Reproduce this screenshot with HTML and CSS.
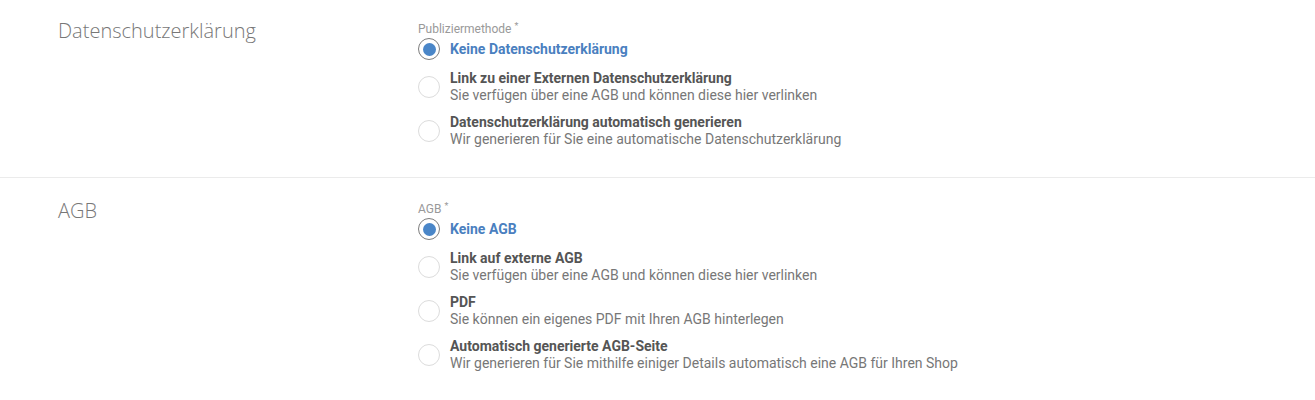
FILE: index.html
```html
<!DOCTYPE html>
<html lang="de">
<head>
    <meta charset="UTF-8">
    <meta name="viewport" content="width=device-width, initial-scale=1.0">
    <title>Rechtliches</title>
    <link rel="stylesheet" href="styles.css">
</head>
<body>
    <div class="section first">
        <h2 class="section_title">Datenschutzerklärung</h2>
        <div class="field">
            <div class="field_label">Publiziermethode <span class="req">*</span></div>
            <label class="option selected">
                <span class="radio"></span>
                <span class="option_text">
                    <span class="option_title">Keine Datenschutzerklärung</span>
                </span>
            </label>
            <label class="option">
                <span class="radio"></span>
                <span class="option_text">
                    <span class="option_title">Link zu einer Externen Datenschutzerklärung</span>
                    <span class="option_desc">Sie verfügen über eine AGB und können diese hier verlinken</span>
                </span>
            </label>
            <label class="option">
                <span class="radio"></span>
                <span class="option_text">
                    <span class="option_title">Datenschutzerklärung automatisch generieren</span>
                    <span class="option_desc">Wir generieren für Sie eine automatische Datenschutzerklärung</span>
                </span>
            </label>
        </div>
    </div>

    <div class="section">
        <h2 class="section_title">AGB</h2>
        <div class="field">
            <div class="field_label">AGB <span class="req">*</span></div>
            <label class="option selected">
                <span class="radio"></span>
                <span class="option_text">
                    <span class="option_title">Keine AGB</span>
                </span>
            </label>
            <label class="option">
                <span class="radio"></span>
                <span class="option_text">
                    <span class="option_title">Link auf externe AGB</span>
                    <span class="option_desc">Sie verfügen über eine AGB und können diese hier verlinken</span>
                </span>
            </label>
            <label class="option">
                <span class="radio"></span>
                <span class="option_text">
                    <span class="option_title">PDF</span>
                    <span class="option_desc">Sie können ein eigenes PDF mit Ihren AGB hinterlegen</span>
                </span>
            </label>
            <label class="option">
                <span class="radio"></span>
                <span class="option_text">
                    <span class="option_title">Automatisch generierte AGB-Seite</span>
                    <span class="option_desc">Wir generieren für Sie mithilfe einiger Details automatisch eine AGB für Ihren Shop</span>
                </span>
            </label>
        </div>
    </div>
</body>
</html>
```

FILE: styles.css
```css
body {
    margin: 0;
    background: #fff;
    font-family: Roboto, "Liberation Sans", sans-serif;
    font-size: 14px;
    color: #555;
}

.section {
    display: grid;
    grid-template-columns: 360px 1fr;
    padding: 24px 0 29px 58px;
    border-bottom: 1px solid #ebebeb;
}

.section.first {
    padding-top: 22px;
}

.section:last-child {
    border-bottom: none;
}

.section_title {
    margin: -5px 0 0 0;
    font-family: "Open Sans", sans-serif;
    font-weight: 300;
    font-size: 20px;
    line-height: 27px;
    color: #777;
}

.field {
    display: flex;
    flex-direction: column;
    gap: 10px;
}

.field_label {
    font-size: 12px;
    line-height: 14px;
    color: #999;
    margin-bottom: -8px;
}

.req {
    font-size: 9px;
    vertical-align: top;
    position: relative;
    top: -3px;
}

.option {
    display: flex;
    align-items: center;
    gap: 10px;
    cursor: pointer;
}

.radio {
    flex: none;
    width: 20px;
    height: 20px;
    border: 1px solid #dcdcdc;
    border-radius: 50%;
    display: flex;
    align-items: center;
    justify-content: center;
    background: #fff;
}

.option.selected .radio {
    border-color: #7d7d7d;
}

.option.selected .radio::after {
    content: "";
    width: 13px;
    height: 13px;
    border-radius: 50%;
    background: #4a86c8;
}

.option_text {
    display: flex;
    flex-direction: column;
    line-height: 17px;
}

.option_title {
    font-weight: 700;
    color: #555;
}

.option.selected .option_title {
    color: #4a80bf;
}

.option_desc {
    color: #777;
}
```
